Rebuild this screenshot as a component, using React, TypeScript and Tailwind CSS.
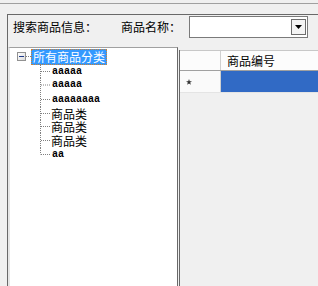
const cjk = "font-['Noto_Sans_CJK_SC','Microsoft_YaHei',sans-serif]";

const children = [
  { t: "aaaaa", h: "h-[13px]", a: true },
  { t: "aaaaa", h: "h-[14px]", a: true },
  { t: "aaaaaaaa", h: "h-[15px]", a: true },
  { t: "商品类", h: "h-[13px]", a: false },
  { t: "商品类", h: "h-[13px]", a: false },
  { t: "商品类", h: "h-[15px]", a: false },
  { t: "aa", h: "h-[13px]", a: true },
];

function Connector({ last }: { last: boolean }) {
  return (
    <svg width="11" height="100%" className="shrink-0 h-full" preserveAspectRatio="none">
      <line x1="0.5" y1="0" x2="0.5" y2={last ? "50%" : "100%"} stroke="#808080" strokeDasharray="1 1" />
      <line x1="1" y1="50%" x2="11" y2="50%" stroke="#808080" strokeDasharray="1 1" />
    </svg>
  );
}

function Tree() {
  return (
    <div className="w-[170px] h-full bg-white border-t border-t-[#a0a0a0] border-l-2 border-l-[#e6e6e6] border-r border-r-[#696969] overflow-hidden">
      <div className="flex items-center h-[17px] pl-[7px]">
        <span className="w-[9px] h-[9px] border border-[#919191] bg-gradient-to-br from-white to-[#dcdcdc] flex items-center justify-center shrink-0">
          <span className="w-[5px] h-px bg-[#1e3a8a]" />
        </span>
        <span className="w-[5px] border-t border-dotted border-[#808080] shrink-0" />
        <span className={`${cjk} text-[12px] leading-[14px] text-white bg-[#3399ff] border border-dotted border-[#d08030] px-px h-[16px] flex items-center`}>
          所有商品分类
        </span>
      </div>
      <div className="pl-[30px]">
        {children.map((c, i) => (
          <div key={i} className={`flex items-stretch ${c.h}`}>
            <Connector last={i === children.length - 1} />
            <span
              className={
                c.a
                  ? "pl-px flex items-center font-['Liberation_Mono',monospace] font-bold text-[10px] leading-[10px] text-black"
                  : `flex items-center ${cjk} text-[12px] leading-[12px] text-black`
              }
            >
              {c.t}
            </span>
          </div>
        ))}
      </div>
    </div>
  );
}

function Grid() {
  return (
    <div className="flex-1 mt-[3px] ml-px border-l border-[#696969] bg-[#f0f0f0]">
      <div className="flex h-[21px] border-t border-[#c8c8c8] border-b border-b-[#a0a0a0] bg-[#fcfcfc]">
        <div className="w-[41px] border-r border-[#d0d0d0]" />
        <div className={`${cjk} pl-[6px] text-[12px] leading-[19px] text-black`}>商品编号</div>
      </div>
      <div className="flex h-[22px] border-b border-[#e4e4e4]">
        <div className="w-[41px] bg-[#fafafa] border-r border-[#d0d0d0] flex items-center pl-[6px]">
          <svg width="6" height="6" viewBox="0 0 10 10">
            <polygon points="5,0 6.3,3.6 10,3.6 7,5.9 8.1,9.6 5,7.4 1.9,9.6 3,5.9 0,3.6 3.7,3.6" fill="#333" />
          </svg>
        </div>
        <div className="flex-1 bg-[#316ac5]" />
      </div>
    </div>
  );
}

export default function App() {
  return (
    <div className="w-[318px] h-[286px] bg-[#f0f0f0] overflow-hidden flex flex-col">
      <div className="mt-[3px] h-px bg-[#a0a0a0]" />
      <div className="mt-[10px] ml-[7px] flex-1 flex flex-col border-l border-t border-[#696969] min-h-0">
        <div className={`h-[32px] flex items-start ${cjk} text-[12px] text-black`}>
          <span className="ml-[5px] mt-[4px] leading-[16px]">搜索商品信息：</span>
          <span className="ml-[24px] mt-[4px] leading-[16px]">商品名称：</span>
          <div className="ml-auto mr-[10px] mt-[1px] w-[119px] h-[22px] bg-white border border-[#7a7a7a] flex items-center justify-end pr-px">
            <div className="w-[15px] h-[16px] border border-[#6d6d6d] bg-[#f4f4f4] flex items-center justify-center">
              <svg width="7" height="4" viewBox="0 0 7 4">
                <polygon points="0,0 7,0 3.5,4" fill="#000" />
              </svg>
            </div>
          </div>
        </div>
        <div className="flex-1 flex min-h-0">
          <Tree />
          <Grid />
        </div>
      </div>
    </div>
  );
}
